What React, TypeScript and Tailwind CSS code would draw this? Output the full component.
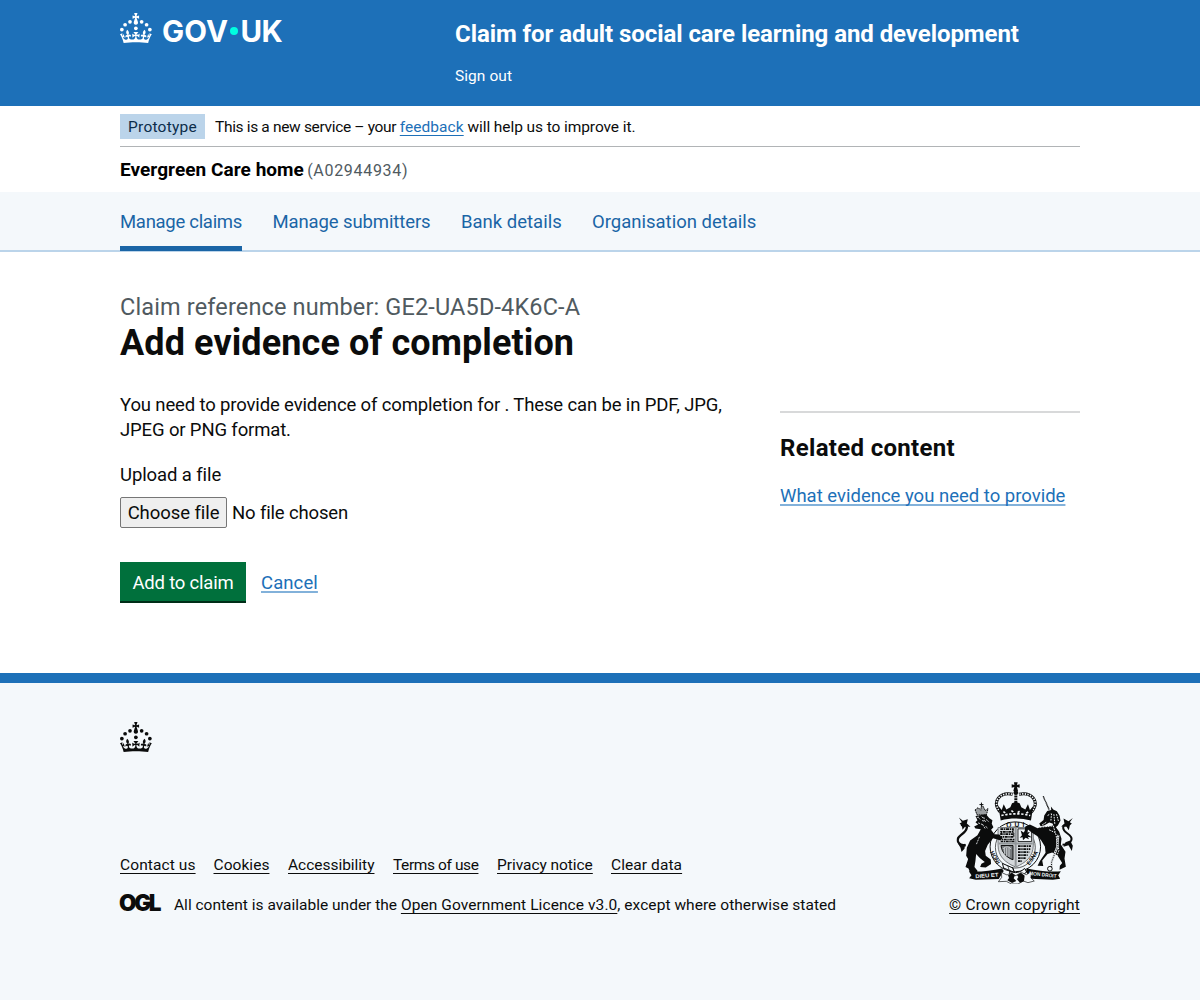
import type { ReactNode } from "react";

function Crown({ className }: { className: string }) {
  return (
    <svg viewBox="0 0 64 60" className={className} fill="currentColor" aria-hidden="true">
      <circle cx="20" cy="17.6" r="3.7" />
      <circle cx="10.2" cy="23.5" r="3.7" />
      <circle cx="3.7" cy="33.2" r="3.7" />
      <circle cx="31.7" cy="30.6" r="3.7" />
      <circle cx="43.3" cy="17.6" r="3.7" />
      <circle cx="53.2" cy="23.5" r="3.7" />
      <circle cx="59.7" cy="33.2" r="3.7" />
      <path d="M33.1,9.8c.2-.1.3-.3.5-.5l4.6,2.4v-6.8l-4.6,1.5c-.1-.2-.3-.3-.5-.5l1.9-5.9h-6.7l1.9,5.9c-.2.1-.3.3-.5.5l-4.6-1.5v6.8l4.6-2.4c.1.2.3.3.5.5l-2.6,8c-.9,2.8,1.2,5.7,4.1,5.7h0c3,0,5.1-2.9,4.1-5.7l-2.6-8ZM37,37.9s-3.4,3.8-4.1,6.1c2.2,0,4.2-.5,6.4-2.8l-.7,8.5c-2-2.8-4.4-4.1-5.7-3.8.1,3.1.5,6.7,5.8,7.2,3.7.3,6.7-1.5,7-3.8.4-2.6-2-4.3-3.7-1.6-1.4-4.5,2.4-6.1,4.9-3.2-1.9-4.5-1.8-7.7,2.4-10.9,3,4,2.6,7.3-1.2,11.1,2.4-1.3,6.2,0,4,4.6-1.2-2.8-3.7-2.2-4.2.2-.3,1.7.7,3.7,3,4.2,1.9.3,4.7-.9,7-5.9-1.3,0-2.4.7-3.9,1.7l2.4-8c.6,2.3,1.4,3.7,2.2,4.5.6-1.6.5-2.8,0-5.3l5,1.8c-2.6,3.6-5.2,8.7-7.3,17.5-7.4-1.1-15.7-1.7-24.5-1.7h0c-8.8,0-17.1.6-24.5,1.7-2.1-8.9-4.7-13.9-7.3-17.5l5-1.8c-.5,2.5-.6,3.7,0,5.3.8-.8,1.6-2.3,2.2-4.5l2.4,8c-1.5-1-2.6-1.7-3.9-1.7,2.3,5,5.2,6.2,7,5.9,2.3-.4,3.3-2.4,3-4.2-.5-2.4-3-3.1-4.2-.2-2.2-4.6,1.6-6,4-4.6-3.7-3.7-4.2-7.1-1.2-11.1,4.2,3.2,4.3,6.4,2.4,10.9,2.5-2.8,6.3-1.3,4.9,3.2-1.8-2.7-4.1-1-3.7,1.6.3,2.3,3.3,4.1,7,3.8,5.4-.5,5.7-4.2,5.8-7.2-1.3-.2-3.7,1-5.7,3.8l-.7-8.5c2.2,2.3,4.2,2.7,6.4,2.8-.7-2.3-4.1-6.1-4.1-6.1h10.6Z" />
    </svg>
  );
}

function RoyalArms() {
  return (
    <svg viewBox="50 35 350 307" className="h-[102px] w-[117px] translate-x-[0.5px]" fill="#0b0c0c" aria-hidden="true">
      {/* crown */}
      <path d="M222 36h11l-2 8 8-2v10l-8-2 3 12h-14l3-12-8 2V42l8 2z" />
      <circle cx="227.500" cy="67" r="7" />
      <path d="M181 126C152 92 182 64 218 72M274 126c29-34-1-62-37-54" fill="none" stroke="#0b0c0c" strokeWidth="9" />
      <path d="M181 126C152 92 182 64 218 72M274 126c29-34-1-62-37-54" fill="none" stroke="#f4f8fb" strokeWidth="5" strokeDasharray="4 4" />
      <path d="M227.500 76v30" fill="none" stroke="#0b0c0c" strokeWidth="9" strokeDasharray="6 2" />
      <path d="M175 107l10 12 6-17 8 16 12-7 5-12 11-4 12 4 5 12 12 7 8-16 6 17 10-12-7 44c-31-8-62-8-91 0z" />
      <path d="M184 136c28-7 59-7 87 0M190 124l7 5m17-8l9 6m10 0l9-6m17 8l7-5" fill="none" stroke="#f4f8fb" strokeWidth="5" strokeDasharray="7 5" />
      {/* garter and shield */}
      <ellipse cx="226" cy="230" rx="76" ry="75" fill="#f4f8fb" stroke="#0b0c0c" strokeWidth="3" />
      <ellipse cx="226" cy="232" rx="60" ry="62" fill="none" stroke="#0b0c0c" strokeWidth="2" />
      <g fontSize="20" fontWeight="bold" className="font-['Liberation_Sans']">
        <text x="199" y="170" textLength="54">QUI</text>
        <text transform="translate(180 278) rotate(-118)" fontSize="17">INOH</text>
        <text transform="translate(269 286) rotate(-56)" fontSize="17">ESNA</text>
      </g>
      <path d="M174 172h106v53c0 35-23 53-53 66-30-13-53-31-53-66z" fill="#d5d9dc" stroke="#777b7e" strokeWidth="3" />
      <path d="M181 177h38v8h-36v7h38v8h-37v8h37v6h-39" fill="none" stroke="#0b0c0c" strokeWidth="5" strokeDasharray="9 2 4 2" />
      <path d="M234 176h41v38h-41z" fill="#f4f8fb" stroke="#0b0c0c" strokeWidth="2.500" />
      <path d="M242 181l9 6 6-7 3 8 10-3-8 11 5 11-10-4-8 7-1-9-9 2 7-8z" />
      <path d="M183 226h36v43c-16-5-34-20-36-43z" fill="#777b7e" stroke="#0b0c0c" strokeWidth="3" />
      <path d="M188 237c7-9 20-9 25 0M193 233v20m7-20v25m7-25v28" stroke="#f4f8fb" strokeWidth="2" fill="none" />
      <path d="M234 228h39m-39 9h37m-37 9h34m-34 9h29m-29 9h23m-23 9h12" stroke="#0b0c0c" strokeWidth="5" strokeDasharray="8 2 4 2" />
      <path d="M227 172v117M176 220h102" stroke="#92979a" strokeWidth="6" />
      {/* buckle */}
      <path d="M187 280l32 14 4 13-32-13zM209 303c15 8 30 6 45-8l6 11c-16 13-34 15-51 6z" fill="#f4f8fb" stroke="#0b0c0c" strokeWidth="3" />
      <path d="M203 286l5 16m9-11l5 15" stroke="#0b0c0c" strokeWidth="2" />
      {/* lion */}
      <path d="M105 119l6 15h28l5-19-9 6-6-13-5-1-2 13-8-8z" fill="#9a9ea0" stroke="#0b0c0c" strokeWidth="3" strokeDasharray="5 2" />
      <path d="M118 103h12m-6-6v12" stroke="#0b0c0c" strokeWidth="3" />
      <path d="M106 137l32-5 9 11 10 7-2 11 5 10-7 8 10 13 15 1 7 8-3 10-23-7-16 20-8 19 2 14 15 11 1 14-16 10-17-1 4-10 10-5-15-12-11-12-2 20-3 19 9 11-2 12-15-2-7-9-3-8-9-4 8-24-6-10 2-24 10-22 22-16 10-18-16-2-4-6 12-6-8-7 6-6z" />
      <path d="M103 146l12-6m-1 18l13 5m4-22l3 12m-7 9l8 13m3-27l9 7m-10 13l6 8m-29-35l7 8m5 2l11 3m-12-15l5 6M106 180l-11 24m23-4l-9 22" fill="none" stroke="#f4f8fb" strokeWidth="2.500" strokeDasharray="6 3" />
      <path d="M77 226c-27-2-31-19-15-31 21-15 27-35 0-30" fill="none" stroke="#0b0c0c" strokeWidth="7" />
      <path d="M56 142l12 10 15-5-3 13 11 10-16-1-8 10-2-14-7-5 7-4zM53 220l13 3 9-2-2 15-9 10-3-13z" />
      {/* unicorn */}
      <path d="M310 78l18 41" stroke="#0b0c0c" strokeWidth="4" strokeDasharray="3 1" />
      <path d="M333 109l7 9 11 5 8 13 3 15-8 15-10 8-6-14-10-3-14 8-12 3-4-8 13-11 2-13 9-14 12-3z" />
      <path d="M350 132l6 22m-14-22l3 31m-10-33l-2 22m-26 12l14-9m2-19l8-5m24 46l8-8" stroke="#f4f8fb" strokeWidth="3" strokeDasharray="5 3" />
      <path d="M322 169l22-4 14 20 7 21-2 17 14 22-3 20 4 25-19 9 1-12 7-8-14-23-16-9-14 5-16 19 3 17-17-1 7-14 17-25-2-19-11-18-10-12-19-12-11-9-2 14 14 10-15-2-8-9 3-22 14-6 23 11 12-4z" />
      <path d="M300 171l40-4 9 29 4 38-12 21m9 5l7-19-6-35M328 179l17 8" fill="none" stroke="#f4f8fb" strokeWidth="3" strokeDasharray="5 3" />
      <path d="M355 194l-3 37-17 45v15" fill="none" stroke="#d5d9dc" strokeWidth="7" />
      <path d="M355 194l-3 37-17 45v15" fill="none" stroke="#0b0c0c" strokeWidth="3" strokeDasharray="3 4" />
      <circle cx="330" cy="296" r="7" fill="none" stroke="#0b0c0c" strokeWidth="3" />
      <path d="M368 224c30-2 35-21 15-34-18-12-18-31 5-25" fill="none" stroke="#0b0c0c" strokeWidth="6" />
      <path d="M399 143l-13 10-15-8 3 15-10 9 16 1 7 10 3-14 6-6-6-4zM391 211l-14 5-6 14 15-5 10 18 3-16z" />
      {/* motto scroll */}
      <path d="M86 304c35 2 68-3 100-9l5 8-15 24-69 2-20-4 7-9z" />
      <path d="M261 295c31 7 67 11 102 9l-8 12 6 10-22 3-67-3-14-21z" />
      <path d="M184 307l17 8 12-7 14 9 17-10 15 7 15-9-1 19 10 9-19 5-14-5-16 9h-20l-15-8-24 1 10-13z" fill="#f4f8fb" stroke="#0b0c0c" strokeWidth="2" />
      <path d="M204 316l11-8 10 8-4 9 8 8-13 6-14-8 5-7zM231 315l12-7 11 9-2 17-12 4-9-10 4-7z" />
      <g fontSize="16" fontWeight="bold" fill="#f4f8fb" className="font-['Liberation_Sans']">
        <text transform="translate(106 325) rotate(-5)" textLength="70" lengthAdjust="spacingAndGlyphs">DIEU ET</text>
        <text transform="translate(267 315) rotate(6)" textLength="83" lengthAdjust="spacingAndGlyphs">MON DROIT</text>
      </g>
    </svg>
  );
}

function FooterLink({ children, className = "" }: { children: ReactNode; className?: string }) {
  return (
    <a href="#" className={`whitespace-nowrap underline decoration-1 underline-offset-[3px] [text-decoration-skip-ink:none] ${className}`}>
      {children}
    </a>
  );
}

export default function App() {
  return (
    <div className="flex h-[1000px] flex-col overflow-hidden bg-white font-['Roboto',sans-serif] text-[#0b0c0c]">
      <header className="h-[106px] shrink-0 bg-[#1d70b8] text-white">
        <div className="mx-auto flex w-[960px]">
          <a href="#" className="flex w-[335px] items-start pt-[13px]" aria-label="GOV.UK">
            <Crown className="h-[30px] w-8" />
            <span className="ml-[10px] flex h-9 items-center font-['Inter'] text-[29.500px] leading-9 font-bold">
              <span className="w-[68px] tracking-[0.1px]">GOV</span>
              <span className="mr-[3px] size-[7.500px] rounded-full bg-[#00ffe0]" />
              <span className="tracking-[-0.600px]">UK</span>
            </span>
          </a>
          <div className="pt-[19px]">
            <p className="text-2xl leading-[30px] font-bold tracking-[-0.07px]">
              Claim for adult social care learning and development
            </p>
            <a href="#" className="mt-[17px] block text-[15.500px] leading-5 tracking-[0.060px]">Sign out</a>
          </div>
        </div>
      </header>

      <div className="mx-auto w-[960px] shrink-0">
        <div className="flex h-[41px] items-center border-b border-[#b1b4b6] text-[15.500px] leading-[25px]">
          <strong className="h-[25px] w-[85px] bg-[#bbd4ea] text-center font-normal leading-[27px] tracking-[0.240px] text-[#0c2d4a]">
            Prototype
          </strong>
          <p className="ml-[10px] pt-0.5">
            <span className="tracking-[-0.330px]">This is a new service – your </span>
            <a href="#" className="tracking-[0.050px] text-[#1d70b8] underline decoration-1 underline-offset-[3px]">feedback</a>
            <span className="tracking-[-0.080px]"> will help us to improve it.</span>
          </p>
        </div>
        <p className="h-[45px] text-[19px] leading-[46px] text-black">
          <span className="font-bold tracking-[0.050px]">Evergreen Care home</span>{" "}
          <span className="-ml-[1.500px] text-[16px] tracking-[0.700px] text-[#505a5f]">(A02944934)</span>
        </p>
      </div>

      <nav className="h-[60px] shrink-0 border-b-2 border-[#bbd4ea] bg-[#f4f8fb]">
        <div className="mx-auto flex h-[59px] w-[960px] text-[18.500px] leading-[60px] whitespace-nowrap text-[#1a65a6]">
          <a href="#" className="mr-[30.500px] h-[59px] w-[122px] border-b-[5px] border-[#1a65a6] tracking-[-0.290px]">Manage claims</a>
          <a href="#" className="w-[188.500px] tracking-[-0.110px]">Manage submitters</a>
          <a href="#" className="w-[131px]">Bank details</a>
          <a href="#">Organisation details</a>
        </div>
      </nav>

      <main className="mx-auto h-[420.500px] w-[960px] shrink-0 pt-10">
        <p className="text-[23.500px] leading-[30px] tracking-[0.140px] text-[#505a5f]">
          Claim reference number: GE2-UA5D-4K6C-A
        </p>
        <h1 className="pt-px text-4xl leading-10 font-bold tracking-[0.1px]">Add evidence of completion</h1>
        <div className="mt-[29px] flex justify-between">
          <form className="w-[630px] pt-px text-[18.500px] leading-[25px]">
            <p className="w-[620px] tracking-[-0.140px]">
              You need to provide evidence of completion for . These can be in PDF, JPG, JPEG or PNG format.
            </p>
            <p className="mt-5 tracking-[-0.1px]">Upload a file</p>
            <div className="mt-[9px] flex h-[31px] items-center">
              <button type="button" className="mr-[5px] h-[31px] w-[107px] rounded-[2px] border border-[#767676] bg-[#efefef] leading-[30px] tracking-[-0.070px]">
                Choose file
              </button>
              <span className="pt-px tracking-[-0.150px]">No file chosen</span>
            </div>
            <div className="mt-[34px] flex items-center">
              <button type="button" className="mr-[15px] h-[41px] w-[126px] bg-[#00703c] pt-px leading-10 tracking-[-0.2px] text-white shadow-[inset_0_-2px_0_#002d18]">
                Add to claim
              </button>
              <a href="#" className="pt-px tracking-[0.1px] text-[#1d70b8] underline decoration-[#82b1da] decoration-2 underline-offset-[2px]">Cancel</a>
            </div>
          </form>
          <aside className="mt-[19px] w-[300px] border-t-2 border-[#d8d9da]">
            <h2 className="mt-5 text-2xl leading-[30px] font-bold tracking-[0.320px]">Related content</h2>
            <a href="#" className="mt-[21px] block text-[18.500px] leading-[25px] text-[#1d70b8] underline decoration-[#82b1da] decoration-2 underline-offset-[2px] [text-decoration-skip-ink:none]">
              What evidence you need to provide
            </a>
          </aside>
        </div>
      </main>

      <footer className="flex-1 border-t-[10px] border-[#1d70b8] bg-[#f4f8fb] text-[15.500px]">
        <div className="mx-auto w-[960px] pt-[39.500px]">
          <Crown className="h-[30px] w-8" />
          <div className="mt-[30px] flex items-end justify-between">
            <div>
              <div className="flex h-5 items-center gap-[18px] leading-5">
                <FooterLink className="w-[75.500px] tracking-[0.1px]">Contact us</FooterLink>
                <FooterLink className="w-[56.500px] tracking-[0.050px]">Cookies</FooterLink>
                <FooterLink className="w-[87px] tracking-[-0.020px]">Accessibility</FooterLink>
                <FooterLink className="w-[86px] tracking-[-0.400px]">Terms of use</FooterLink>
                <FooterLink className="w-[96px] tracking-[-0.050px]">Privacy notice</FooterLink>
                <FooterLink className="tracking-[0.080px]">Clear data</FooterLink>
              </div>
              <div className="mt-5 flex h-5 items-center leading-5">
                <span className="mr-[13px] w-[41px] -translate-x-px -translate-y-[2px] font-['Inter'] text-[22.500px] font-black tracking-[-2.300px]">OGL</span>
                <p className="whitespace-nowrap">
                  All content is available under the{" "}
                  <FooterLink className="tracking-[0.080px]">Open Government Licence v3.0</FooterLink>
                  <span className="tracking-[0.050px]">, except where otherwise stated</span>
                </p>
              </div>
            </div>
            <div className="flex flex-col items-center">
              <RoyalArms />
              <FooterLink className="mt-[11px] leading-5 tracking-[0.150px]">© Crown copyright</FooterLink>
            </div>
          </div>
        </div>
      </footer>
    </div>
  );
}
